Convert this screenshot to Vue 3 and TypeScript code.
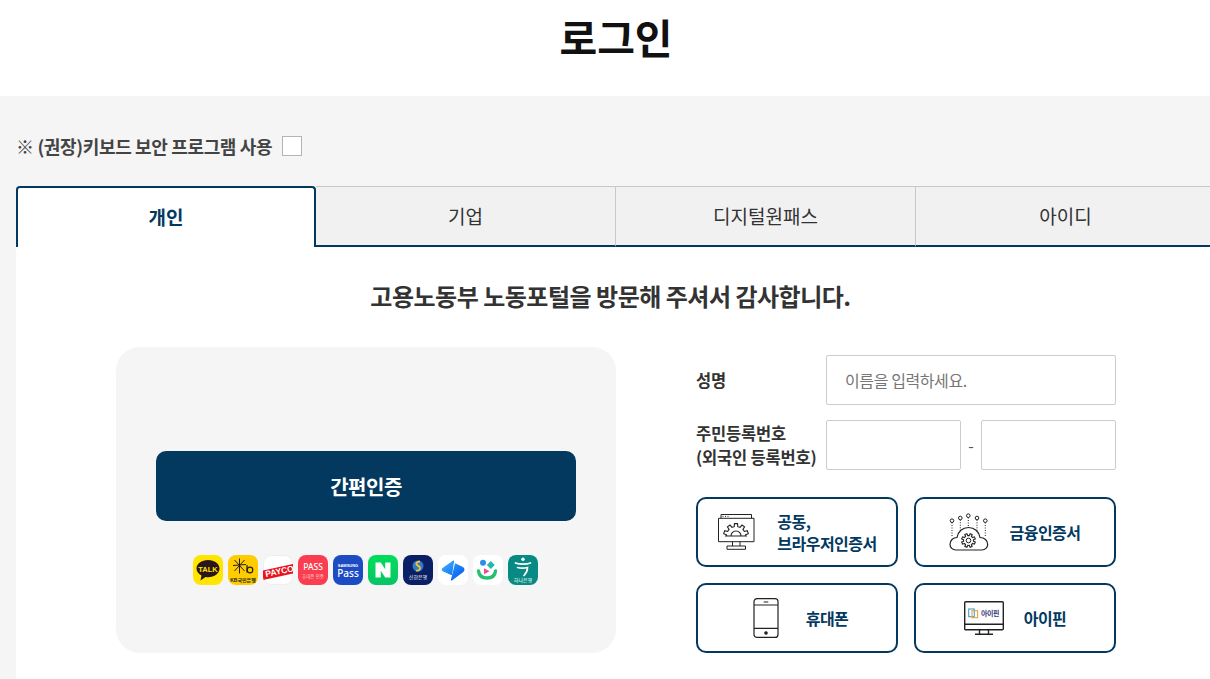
<script setup lang="ts">
import { ref } from 'vue'

const tabs: string[] = ['개인', '기업', '디지털원패스', '아이디']
const activeTab = ref<number>(0)
const useKeyboard = ref<boolean>(false)
const userName = ref<string>('')

// toothed outline, angles in degrees going clockwise from startDeg
function gearPath(cx: number, cy: number, outer: number, inner: number, teeth: number, startDeg: number, sweep: number): string {
  const pts: string[] = []
  const step = sweep / teeth
  for (let i = 0; i < teeth; i++) {
    const a = startDeg + step * i
    const marks: Array<[number, number]> = [
      [a, inner],
      [a + step * 0.2, inner],
      [a + step * 0.3, outer],
      [a + step * 0.7, outer],
      [a + step * 0.8, inner],
    ]
    marks.forEach(([deg, r]) => {
      const rad = (deg * Math.PI) / 180
      pts.push(`${(cx + r * Math.cos(rad)).toFixed(2)} ${(cy + r * Math.sin(rad)).toFixed(2)}`)
    })
  }
  return 'M' + pts.join('L')
}

const halfGear = gearPath(20, 24, 12.5, 9.5, 5, 180, 180) + 'L29.500 24'
const smallGear = gearPath(19.5, 28.5, 7, 5, 8, 0, 360) + 'Z'
</script>

<template>
  <div class="page">
    <h1 class="title">로그인</h1>
    <main class="body">
      <label class="secure">
        <span>※ (권장)키보드 보안 프로그램 사용</span>
        <input v-model="useKeyboard" class="check" type="checkbox" />
      </label>

      <ul class="tabs">
        <li
          v-for="(tab, i) in tabs"
          :key="tab"
          class="tab"
          :class="{ active: i === activeTab }"
          @click="activeTab = i"
        >
          {{ tab }}
        </li>
      </ul>

      <section class="panel">
        <p class="greeting">고용노동부 노동포털을 방문해 주셔서 감사합니다.</p>
        <div class="columns">
          <div class="easy">
            <button class="easy-btn" type="button">간편인증</button>
            <div class="brands">
              <svg class="brand" viewBox="0 0 30 30">
                <rect width="30" height="30" rx="8" fill="#ffe500" />
                <path d="M15 5C8.400 5 3.500 8.800 3.500 13.600c0 3 2 5.600 5 7l-1 4.900 5-3.400c.8.1 1.600.2 2.500.2 6.600 0 11.500-3.900 11.500-8.700S21.600 5 15 5z" fill="#2b1718" />
                <text x="15" y="16.500" text-anchor="middle" class="b-text" font-size="7.500" fill="#ffe500">TALK</text>
              </svg>
              <svg class="brand" viewBox="0 0 30 30">
                <rect width="30" height="30" rx="8" fill="#ffcc00" />
                <path d="M5 10.500l13-1M11.500 3.500v15M6.500 5l10 11M16.500 5l-10 11" stroke="#231f20" stroke-width="1" fill="none" />
                <path d="M19 10v7.500" stroke="#231f20" stroke-width="1.200" fill="none" />
                <circle cx="22" cy="15" r="2.800" stroke="#231f20" stroke-width="1.200" fill="none" />
                <text x="15" y="27" text-anchor="middle" class="b-text" font-size="5" fill="#231f20">KB국민은행</text>
              </svg>
              <svg class="brand" viewBox="0 0 30 30">
                <defs>
                  <clipPath id="payco-clip"><rect width="30" height="30" rx="8" /></clipPath>
                </defs>
                <rect x=".5" y=".5" width="29" height="29" rx="8" fill="#fff" stroke="#eeeef0" />
                <g clip-path="url(#payco-clip)">
                  <path d="M0 15.500L30 9v9.500L0 25z" fill="#e8141c" />
                  <text x="3" y="22" class="b-text" font-size="8.500" fill="#fff" transform="rotate(-12 3 22)">PAYCO</text>
                </g>
              </svg>
              <svg class="brand" viewBox="0 0 30 30">
                <rect width="30" height="30" rx="8" fill="#fa3d4f" />
                <text x="15" y="15" text-anchor="middle" class="b-text b-noto" font-size="8.500" fill="#fff">PASS</text>
                <text x="15" y="22.500" text-anchor="middle" class="b-text b-thin" font-size="4.500" fill="#ffd5d9">휴대폰 인증</text>
              </svg>
              <svg class="brand" viewBox="0 0 30 30">
                <rect width="30" height="30" rx="8" fill="#1c4bc4" />
                <text x="15" y="12" text-anchor="middle" class="b-text" font-size="4" fill="#fff">SAMSUNG</text>
                <text x="15" y="22" text-anchor="middle" class="b-text b-noto" font-size="10" fill="#fff">Pass</text>
              </svg>
              <svg class="brand" viewBox="0 0 30 30">
                <defs>
                  <linearGradient id="naver-bg" x1="0" y1="0" x2="0" y2="1">
                    <stop offset="0" stop-color="#00de5a" />
                    <stop offset="1" stop-color="#07c564" />
                  </linearGradient>
                </defs>
                <rect width="30" height="30" rx="8" fill="url(#naver-bg)" />
                <path d="M7.500 7.500h5.300l4.400 6.800V7.500h5.300v15h-5.300l-4.400-6.800v6.800H7.500z" fill="#fff" />
              </svg>
              <svg class="brand" viewBox="0 0 30 30">
                <rect width="30" height="30" rx="8" fill="#0a1f66" />
                <circle cx="15" cy="11" r="5.500" fill="#2f7cc0" />
                <path d="M17 6.500c-3.500 0-4.500 2-3 3.500s3.500 1.500 3 3.500-2.500 2.500-4 2" stroke="#f0c23c" stroke-width="1.800" fill="none" />
                <text x="15" y="24" text-anchor="middle" class="b-text b-thin" font-size="5" fill="#fff">신한은행</text>
              </svg>
              <svg class="brand" viewBox="0 0 30 30">
                <defs>
                  <linearGradient id="toss-a" gradientUnits="userSpaceOnUse" x1="5" y1="5" x2="22" y2="24">
                    <stop offset="0" stop-color="#3cb4ff" />
                    <stop offset="1" stop-color="#0a5cf0" />
                  </linearGradient>
                </defs>
                <rect width="30" height="30" rx="8" fill="#fff" />
                <path d="M15.500 6L5 13.500q-1.500 1.500.5 2.500l8 3.500z" fill="url(#toss-a)" stroke="url(#toss-a)" stroke-width="1.200" stroke-linejoin="round" />
                <path d="M17.500 9l7 3.500q2.500 1.500 .5 4L13.500 25z" fill="url(#toss-a)" stroke="url(#toss-a)" stroke-width="1.200" stroke-linejoin="round" />
              </svg>
              <svg class="brand" viewBox="0 0 30 30">
                <rect width="30" height="30" rx="8" fill="#fff" />
                <circle cx="10" cy="7.700" r="3" fill="#2b8fe8" />
                <rect x="15" y="7.200" width="5.600" height="5.600" fill="#25b7b0" transform="rotate(45 17.800 10)" />
                <path d="M11 13.300l5.500 3-5.500 3z" fill="#ec4b8e" />
                <path d="M5.500 16c.5 4.500 3.800 7 8.500 7s8-2.500 8.500-7" stroke="#25c173" stroke-width="3.400" fill="none" stroke-linecap="round" />
              </svg>
              <svg class="brand" viewBox="0 0 30 30">
                <rect width="30" height="30" rx="8" fill="#078a83" />
                <circle cx="15" cy="4.300" r="1.700" fill="#fff" />
                <path d="M7.500 8c4 1.500 11 1.500 15 0M9.500 12.500c3 .8 7 .8 10 0 0 3.500-1.500 6-3.500 8" stroke="#fff" stroke-width="1.700" fill="none" stroke-linecap="round" />
                <text x="15" y="27" text-anchor="middle" class="b-text b-thin" font-size="5" fill="#fff">하나은행</text>
              </svg>
            </div>
          </div>

          <form class="login" @submit.prevent>
            <div class="row">
              <label class="field-label" for="user-name">성명</label>
              <input id="user-name" v-model="userName" class="input" type="text" placeholder="이름을 입력하세요." />
            </div>
            <div class="row">
              <label class="field-label">주민등록번호<br />(외국인 등록번호)</label>
              <div class="rrn">
                <input class="input" type="text" />
                <span class="dash">-</span>
                <input class="input" type="password" />
              </div>
            </div>
            <div class="methods">
              <button class="method" type="button">
                <svg class="method-icon" viewBox="1 0 40 40" fill="none" stroke="#222" stroke-width="1">
                  <path d="M5 6.300V2.500h30.500v3.800M2.500 6.300h35.500v23.400H2.500z" />
                  <path d="M16.500 29.700V34M24 29.700V34M11 34h18.500v3.300H11z" />
                  <path d="M6.500 4.400h1M9 4.400h1M11.500 4.400h1" />
                  <path :d="halfGear" stroke-width="1.100" />
                  <path d="M9 24h22M15 24a5 5 0 0 1 10 0" stroke-width="1.100" />
                </svg>
                <span>공동,<br />브라우저인증서</span>
              </button>
              <button class="method" type="button">
                <svg class="method-icon" viewBox="0 0 40 40" fill="none" stroke="#222" stroke-width="1">
                  <circle cx="3" cy="8.700" r="1.800" />
                  <circle cx="11.300" cy="6" r="1.800" />
                  <circle cx="19.300" cy="3.700" r="1.800" />
                  <circle cx="28" cy="6" r="1.800" />
                  <circle cx="36.300" cy="8.700" r="1.800" />
                  <path d="M3 10.500v15M11.300 7.800v13M19.300 5.500v11M28 7.800v13M36.300 10.500v15" stroke-dasharray="1 1.500" />
                  <path d="M7 38C3.500 38 1 35.500 1 32.500 1 28.500 4 25.500 8 25.500 9 19.500 13.500 15.500 19.500 15.500S30 19.500 31 25.500C35.500 25.500 38.700 28.500 38.700 32.500 38.700 35.500 36 38 33 38Z" fill="#fff" stroke-width="1.200" />
                  <path :d="smallGear" stroke-width="1.100" />
                  <circle cx="19.500" cy="28.500" r="2.300" />
                </svg>
                <span>금융인증서</span>
              </button>
              <button class="method" type="button">
                <svg class="method-icon" viewBox="0 0 40 40" fill="none" stroke="#222" stroke-width="1.200">
                  <rect x="8" y=".6" width="24" height="38.800" rx="3" />
                  <path d="M8 7h24M8 30.300h24M17.700 4h4.600" />
                  <circle cx="20" cy="35" r="1.200" fill="#222" />
                </svg>
                <span>휴대폰</span>
              </button>
              <button class="method" type="button">
                <svg class="method-icon" viewBox="0 0 40 40" fill="none" stroke="#222" stroke-width="1.400">
                  <rect x=".7" y="3.700" width="38.600" height="28" rx="1" />
                  <path d="M.7 26.300h38.600M15.500 31.700V36M24.500 31.700V36M11 36.200h18" />
                  <rect x="4.700" y="11" width="5.600" height="7.700" stroke="#3f9fd8" stroke-width="1.100" />
                  <rect x="8" y="12.700" width="5.600" height="7" stroke="#eda13a" stroke-width="1.100" />
                  <text x="26" y="18" text-anchor="middle" class="b-text" font-size="7" fill="#3c3c78" stroke="none">아이핀</text>
                </svg>
                <span>아이핀</span>
              </button>
            </div>
          </form>
        </div>
      </section>
    </main>
  </div>
</template>

<style>
html,
body {
  margin: 0;
  overflow: hidden;
}
</style>

<style scoped>
.page {
  width: 1232px;
  height: 679px;
  overflow: hidden;
  background: #fff;
  color: #222;
  font-family: "Noto Sans CJK KR", "Noto Sans", sans-serif;
}
.title {
  height: 96px;
  margin: 0;
  font-size: 41px;
  font-weight: 700;
  line-height: 72px;
  text-align: center;
  color: #111;
}
.body {
  height: 583px;
  padding: 0 16px;
  background: #f5f5f5;
}
.secure {
  display: flex;
  align-items: center;
  gap: 10px;
  height: 100px;
  font-size: 18px;
  font-weight: 700;
  letter-spacing: -0.35px;
  color: #444;
}
.check {
  width: 20px;
  height: 20px;
  margin: 0;
  appearance: none;
  background: #fff;
  border: 1px solid #b4b4b4;
}
.tabs {
  display: flex;
  height: 61px;
  margin: -10px 0 0;
  padding: 0;
  list-style: none;
}
.tab {
  display: flex;
  flex: 0 0 300px;
  align-items: center;
  justify-content: center;
  box-sizing: border-box;
  padding-bottom: 2px;
  font-size: 19px;
  color: #333;
  background: #f1f1f1;
  border: 1px solid #c8c8c8;
  border-bottom: 2px solid #03395f;
  border-left-width: 0;
}
.tab.active {
  font-weight: 700;
  color: #03395f;
  background: #fff;
  border: 2px solid #03395f;
  border-bottom: 0;
  border-radius: 4px 4px 0 0;
}
.panel {
  height: 432px;
  background: #fff;
}
.greeting {
  margin: 0;
  padding: 30px 11px 2px 0;
  font-size: 24px;
  font-weight: 700;
  letter-spacing: -0.5px;
  line-height: 38px;
  text-align: center;
  color: #333;
}
.columns {
  display: flex;
  gap: 80px;
  justify-content: center;
  margin-top: 30px;
}
.easy {
  box-sizing: border-box;
  width: 500px;
  height: 306px;
  padding: 104px 40px 0;
  background: #f5f5f5;
  border-radius: 24px;
}
.easy-btn {
  width: 100%;
  height: 70px;
  font-family: inherit;
  font-size: 20px;
  font-weight: 700;
  letter-spacing: -0.5px;
  color: #fff;
  background: #03395f;
  border: 0;
  border-radius: 10px;
}
.brands {
  display: flex;
  gap: 5px;
  justify-content: center;
  margin-top: 34px;
  padding-right: 1px;
}
.brand {
  width: 30px;
  height: 30px;
}
.b-text {
  font-family: "Liberation Sans", "Noto Sans CJK KR", sans-serif;
  font-weight: 700;
}
.b-noto {
  font-family: "Noto Sans", sans-serif;
  font-weight: 500;
}
.b-thin {
  font-weight: 400;
}
.login {
  width: 420px;
  padding-top: 8px;
}
.row {
  display: flex;
  align-items: center;
  margin-bottom: 15px;
}
.field-label {
  flex: 0 0 130px;
  font-size: 16.500px;
  font-weight: 700;
  letter-spacing: -0.2px;
  line-height: 24px;
  color: #333;
}
.input {
  box-sizing: border-box;
  width: 100%;
  height: 50px;
  padding: 0 18px;
  font-family: inherit;
  font-size: 16px;
  letter-spacing: -0.4px;
  background: #fff;
  border: 1px solid #ccc;
  border-radius: 2px;
}
.input::placeholder {
  color: #767676;
}
.rrn {
  display: flex;
  flex: 1;
  align-items: center;
}
.rrn .input {
  flex: 0 0 135px;
  width: 135px;
}
.dash {
  flex: 1;
  text-align: center;
  font-size: 16px;
  color: #555;
}
.methods {
  display: grid;
  grid-template-columns: 202px 202px;
  gap: 16px;
  justify-content: space-between;
  margin-top: 27px;
}
.method {
  display: flex;
  align-items: center;
  justify-content: center;
  gap: 20px;
  height: 70px;
  padding: 0;
  font-family: inherit;
  font-size: 16px;
  font-weight: 700;
  letter-spacing: -0.5px;
  line-height: 22px;
  text-align: left;
  color: #03395f;
  background: #fff;
  border: 2px solid #03395f;
  border-radius: 10px;
}
.method-icon {
  flex: 0 0 40px;
  width: 40px;
  height: 40px;
}
</style>
